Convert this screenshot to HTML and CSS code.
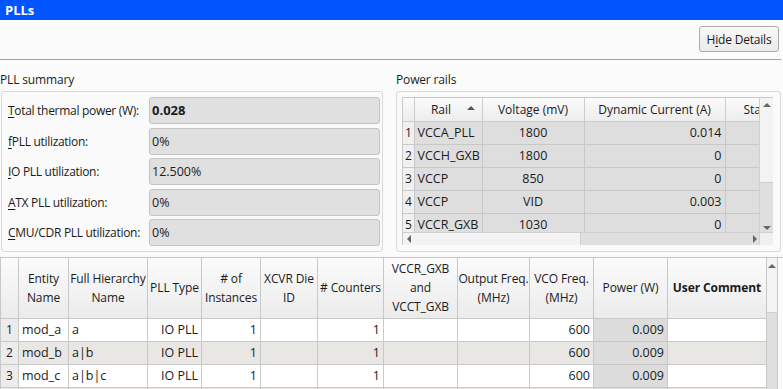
FILE: index.html
```html
<!DOCTYPE html>
<html>
<head>
<meta charset="utf-8">
<link rel="stylesheet" href="styles.css">
</head>
<body>
<div class="titlebar">PLLs</div>
<div class="toolbar"><button class="btn">H<u>i</u>de Details</button></div>
<div class="panels">
  <section class="panel summary-panel">
    <div class="panel-title">PLL summary</div>
    <div class="groupbox summary">
      <div class="field-row"><span class="lbl"><u>T</u>otal thermal power (W):</span><div class="field strong">0.028</div></div>
      <div class="field-row"><span class="lbl"><u>f</u>PLL utilization:</span><div class="field">0%</div></div>
      <div class="field-row"><span class="lbl"><u>I</u>O PLL utilization:</span><div class="field">12.500%</div></div>
      <div class="field-row"><span class="lbl"><u>A</u>TX PLL utilization:</span><div class="field">0%</div></div>
      <div class="field-row"><span class="lbl"><u>C</u>MU/CDR PLL utilization:</span><div class="field">0%</div></div>
    </div>
  </section>
  <section class="panel rails-panel">
    <div class="panel-title">Power rails</div>
    <div class="groupbox rails">
      <div class="grid-frame">
        <div class="grid-view">
          <table class="rails-table">
            <colgroup><col class="rc-num"><col class="rc-rail"><col class="rc-volt"><col class="rc-dyn"><col class="rc-sta"></colgroup>
            <thead>
              <tr><th class="corner-h"></th><th class="sorted">Rail<span class="sort-arrow"></span></th><th>Voltage (mV)</th><th>Dynamic Current (A)</th><th class="left">Sta</th></tr>
            </thead>
            <tbody>
              <tr><td class="num">1</td><td class="left">VCCA_PLL</td><td class="center">1800</td><td class="right">0.014</td><td></td></tr>
              <tr><td class="num">2</td><td class="left">VCCH_GXB</td><td class="center">1800</td><td class="right">0</td><td></td></tr>
              <tr><td class="num">3</td><td class="left">VCCP</td><td class="center">850</td><td class="right">0</td><td></td></tr>
              <tr><td class="num">4</td><td class="left">VCCP</td><td class="center">VID</td><td class="right">0.003</td><td></td></tr>
              <tr><td class="num">5</td><td class="left">VCCR_GXB</td><td class="center">1030</td><td class="right">0</td><td></td></tr>
            </tbody>
          </table>
        </div>
        <div class="vscroll">
          <div class="arrow-box"><span class="tri-up"></span></div>
          <div class="v-thumb"></div>
          <div class="v-track"></div>
          <div class="arrow-box small"><span class="tri-down"></span></div>
        </div>
        <div class="hscroll">
          <div class="harrow-box"><span class="tri-left"></span></div>
          <div class="h-thumb"></div>
          <div class="h-track"></div>
          <div class="harrow-box"><span class="tri-right"></span></div>
        </div>
        <div class="sc-corner"></div>
      </div>
    </div>
  </section>
</div>
<div class="main-grid">
  <div class="main-view">
    <table class="main-table">
      <colgroup>
        <col class="c18"><col class="c50"><col class="c79"><col class="c54"><col class="c59"><col class="c57"><col class="c66"><col class="c74"><col class="c72"><col class="c64"><col class="c74"><col class="c99">
      </colgroup>
      <thead>
        <tr>
          <th></th>
          <th>Entity<br>Name</th>
          <th>Full Hierarchy<br>Name</th>
          <th>PLL Type</th>
          <th># of<br>Instances</th>
          <th>XCVR Die<br>ID</th>
          <th># Counters</th>
          <th>VCCR_GXB<br>and<br>VCCT_GXB</th>
          <th>Output Freq.<br>(MHz)</th>
          <th>VCO Freq.<br>(MHz)</th>
          <th>Power (W)</th>
          <th class="bold">User Comment</th>
        </tr>
      </thead>
      <tbody>
        <tr><td class="num">1</td><td class="left">mod_a</td><td class="left">a</td><td class="right">IO PLL</td><td class="right">1</td><td></td><td class="right">1</td><td></td><td></td><td class="right">600</td><td class="right pw">0.009</td><td></td></tr>
        <tr class="alt"><td class="num">2</td><td class="left">mod_b</td><td class="left">a|b</td><td class="right">IO PLL</td><td class="right">1</td><td></td><td class="right">1</td><td></td><td></td><td class="right">600</td><td class="right pw">0.009</td><td></td></tr>
        <tr><td class="num">3</td><td class="left">mod_c</td><td class="left">a|b|c</td><td class="right">IO PLL</td><td class="right">1</td><td></td><td class="right">1</td><td></td><td></td><td class="right">600</td><td class="right pw">0.009</td><td></td></tr>
        <tr class="alt"><td class="num"></td><td></td><td></td><td></td><td></td><td></td><td></td><td></td><td></td><td></td><td class="pw"></td><td></td></tr>
      </tbody>
    </table>
  </div>
  <div class="vscroll main-vscroll">
    <div class="arrow-box"><span class="tri-up"></span></div>
    <div class="v-thumb main-thumb"></div>
    <div class="v-track"></div>
  </div>
</div>
</body>
</html>
```
FILE: styles.css
```css
* { box-sizing: border-box; }
html, body { margin: 0; padding: 0; }
body {
  width: 783px;
  height: 389px;
  overflow: hidden;
  background: #fbfbfb;
  font-family: "Open Sans", "Noto Sans", sans-serif;
  font-size: 12px;
  color: #1b1b1b;
}
u { text-decoration: underline; text-underline-offset: 2px; }

.titlebar {
  height: 20px;
  background: #0055ff;
  color: #fff;
  font-weight: bold;
  font-size: 13px;
  line-height: 20px;
  padding-left: 5px;
}
.toolbar {
  height: 40px;
  border-bottom: 1px solid #a3a3a3;
  display: flex;
  justify-content: flex-end;
  align-items: flex-start;
  padding: 6px 2px 0 0;
  margin-right: 2px;
}
.btn {
  width: 80px;
  height: 26px;
  border: 1px solid #ababab;
  border-radius: 3px;
  background: linear-gradient(#f8f8f8, #ebebeb);
  font-family: inherit;
  font-size: 12px;
  letter-spacing: -0.2px;
  color: #1b1b1b;
  padding: 0;
}

.panels {
  display: flex;
  gap: 13px;
  padding: 0 2px 0 0;
}
.panel { display: flex; flex-direction: column; }
.summary-panel { width: 383px; }
.rails-panel { width: 385px; }
.panel-title {
  height: 31px;
  padding-top: 11px;
  line-height: 17px;
  letter-spacing: -0.15px;
}
.groupbox {
  height: 161px;
  border: 1px solid #d9d9d9;
  border-radius: 3px;
  background: #fafafa;
}
.summary { margin-left: 1px; padding: 5px 2px 0 6px; display: flex; flex-direction: column; gap: 3.5px; }
.field-row { display: flex; align-items: center; height: 27px; }
.lbl { width: 141px; flex: none; letter-spacing: -0.3px; }
.field {
  flex: 1;
  height: 27px;
  border: 1px solid #c4c4c4;
  border-radius: 3px;
  background: #e0e0e0;
  line-height: 25px;
  padding-left: 2px;
  font-size: 12.5px;
}
.field.strong { font-weight: bold; font-size: 13px; }

.rails { padding: 5px 7px 6px 5px; }
.grid-frame {
  height: 148px;
  border: 1px solid #c9c9c9;
  display: grid;
  grid-template-columns: 356px 14px;
  grid-template-rows: 134px 13px;
  background: #fff;
}
.grid-view { overflow: hidden; }
.rails-table {
  border-collapse: collapse;
  table-layout: fixed;
  width: 420px;
}
.rc-num { width: 11px; }
.rc-rail { width: 68px; }
.rc-volt { width: 102px; }
.rc-dyn { width: 141px; }
.rc-sta { width: 98px; }
.rails-table th {
  height: 23px;
  font-weight: normal;
  background: linear-gradient(#fafafa, #ededed);
  border: 1px solid #cbcbcb;
  border-top: none;
  padding: 0;
  white-space: nowrap;
  overflow: hidden;
  text-align: center;
}
.rails-table th:first-child { border-left: none; }
.rails-table th.left { text-align: left; padding-left: 18px; }
.rails-table th.sorted { position: relative; padding-right: 14px; }
.sort-arrow {
  position: absolute;
  right: 7px;
  top: 8px;
  width: 0; height: 0;
  border-left: 4px solid transparent;
  border-right: 4px solid transparent;
  border-bottom: 4px solid #555;
}
.rails-table td {
  height: 23px;
  background: #dedede;
  border: 1px solid #c8c8c8;
  padding: 0 3px;
  white-space: nowrap;
  overflow: hidden;
  font-size: 12.5px;
}
.rails-table td:first-child { border-left: none; }
.rails-table td.num {
  background: #f0f0f0;
  padding: 0 0 0 2px;
  font-size: 12px;
}
.left { text-align: left; }
.right { text-align: right; }
.center { text-align: center; }

.vscroll {
  background: #dfdfdf;
  border-left: 1px solid #d0d0d0;
  display: flex;
  flex-direction: column;
}
.arrow-box {
  height: 13px;
  background: #f3f3f3;
  display: flex;
  align-items: center;
  justify-content: center;
}
.arrow-box.small { height: 9px; background: #dfdfdf; }
.v-thumb { height: 72px; background: #f3f3f3; border-bottom: 1px solid #cfcfcf; }
.v-track { flex: 1; }
.tri-up, .tri-down, .tri-left, .tri-right { width: 0; height: 0; display: block; }
.tri-up { border-left: 4px solid transparent; border-right: 4px solid transparent; border-bottom: 4px solid #666; }
.tri-down { border-left: 4px solid transparent; border-right: 4px solid transparent; border-top: 4px solid #666; }
.tri-left { border-top: 4px solid transparent; border-bottom: 4px solid transparent; border-right: 4px solid #666; }
.tri-right { border-top: 4px solid transparent; border-bottom: 4px solid transparent; border-left: 4px solid #666; }

.hscroll {
  border-top: 1px solid #d0d0d0;
  display: flex;
  background: #dfdfdf;
}
.harrow-box {
  width: 11px;
  display: flex;
  align-items: center;
  justify-content: center;
  background: #f3f3f3;
}
.harrow-box:last-child { width: 8px; background: #dfdfdf; }
.h-thumb { width: 167px; background: #f3f3f3; border-right: 1px solid #cfcfcf; }
.h-track { flex: 1; }
.sc-corner { background: #f0f0f0; border-left: 1px solid #d0d0d0; border-top: 1px solid #d0d0d0; }

.main-grid {
  margin-top: 5px;
  display: grid;
  grid-template-columns: 766px 12px;
  height: 132px;
  border-top: 1px solid #c6c6c6;
}
.main-view { overflow: hidden; }
.main-table {
  border-collapse: collapse;
  table-layout: fixed;
  width: 766px;
}
.c18 { width: 18px; } .c50 { width: 50px; } .c79 { width: 79px; } .c54 { width: 54px; }
.c59 { width: 59px; } .c57 { width: 57px; } .c66 { width: 66px; } .c74 { width: 74px; }
.c72 { width: 72px; } .c64 { width: 64px; } .c99 { width: 99px; }
.main-table th {
  height: 60px;
  font-weight: normal;
  line-height: 19px;
  background: linear-gradient(#fbfbfb, #ebebeb);
  border: 1px solid #c8c8c8;
  border-top: none;
  padding: 0;
  text-align: center;
  white-space: nowrap;
  overflow: hidden;
  letter-spacing: -0.1px;
}
.main-table th.bold { font-weight: bold; }
.main-table td {
  height: 23px;
  background: #fff;
  border: 1px solid #c8c8c8;
  padding: 0 3px;
  white-space: nowrap;
  overflow: hidden;
  font-size: 12.5px;
}
.main-table tr.alt td { background: #e8e7e4; }
.main-table td.num { background: #ececec; padding: 0; text-align: center; font-size: 12px; }
.main-table tr.alt td.num { background: #ececec; }
.main-table td.pw, .main-table tr.alt td.pw { background: #dcdcdc; }
.main-vscroll { border-left: 1px solid #c8c8c8; border-right: 1px solid #c8c8c8; }
.main-vscroll .arrow-box { height: 15px; }
.main-thumb { height: 40px; }
```
